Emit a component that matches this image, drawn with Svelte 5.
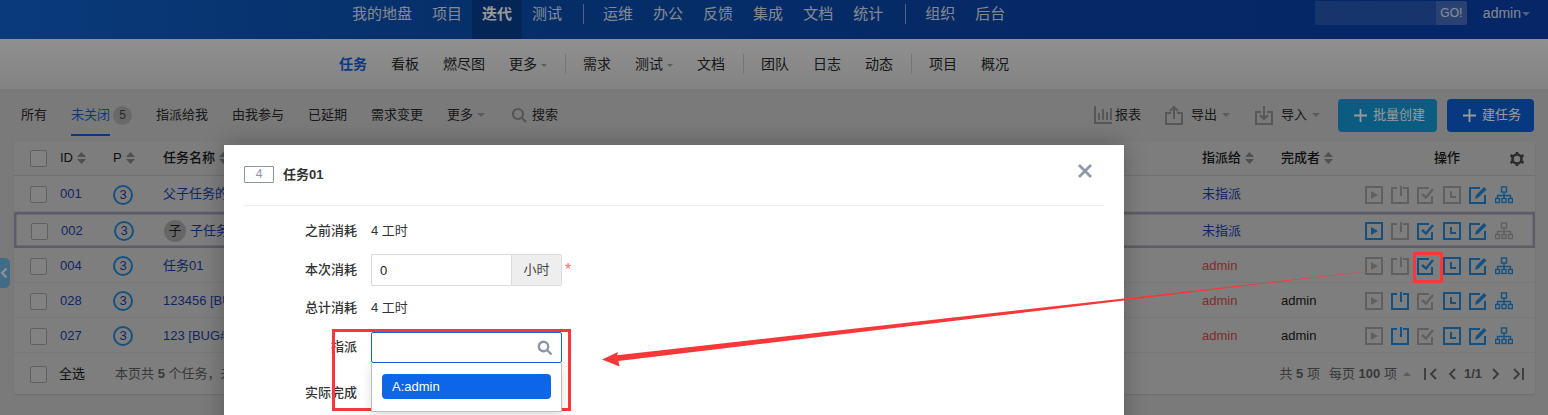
<script>
  const mainNav = [['我的地盘'], ['项目'], ['迭代', true], ['测试']];
  const opsNav = ['运维', '办公', '反馈', '集成', '文档', '统计'];
  const rows = [
    { id: '001', name: '父子任务的子任务', to: '未指派', toCls: 'link', done: '', st: [0, 0, 0, 0, 1, 1] },
    { id: '002', sub: true, name: '子任务名称', to: '未指派', toCls: 'link', done: '', sel: true, st: [1, 0, 1, 1, 1, 0] },
    { id: '004', name: '任务01', to: 'admin', toCls: 'red', done: '', st: [0, 0, 1, 1, 1, 1] },
    { id: '028', name: '123456 [BUG#12]', to: 'admin', toCls: 'red', done: 'admin', st: [0, 1, 0, 1, 1, 1] },
    { id: '027', name: '123 [BUG#11]', to: 'admin', toCls: 'red', done: 'admin', st: [0, 1, 0, 1, 1, 1] }
  ];
  const tabs = ['指派给我', '由我参与', '已延期', '需求变更'];
</script>

{#snippet sort()}
  <svg class="sort" width="9" height="12" viewBox="0 0 9 12"><path d="M4.500 0 9 5H0zM0 7h9l-4.500 5z" /></svg>
{/snippet}

{#snippet caret()}
  <i class="caret"></i>
{/snippet}

{#snippet check()}
  <span class="check"></span>
{/snippet}

{#snippet op(kind, on)}
  <svg class="op" class:on width="18" height="18" viewBox="0 0 18 18">
    {#if kind === 0}
      <rect x="1" y="1" width="16" height="16" class="ln" /><path d="M6 5l7 4-7 4z" class="fl" />
    {:else if kind === 1}
      <path d="M6 2H1v15h16V2h-5" class="ln" /><path d="M10 0v10" class="ln" />
    {:else if kind === 2}
      <path d="M15 10v7H1V2h11" class="ln" /><path d="M5 8l4 3.500L16 3" class="ln thick" />
    {:else if kind === 3}
      <rect x="1" y="1" width="16" height="16" class="ln" /><path d="M8 5v6h5" class="ln" />
    {:else if kind === 4}
      <path d="M16 9v8H1V2h10" class="ln" /><path d="M6 13l1-4 8-8 2.500 2.500-8 8z" class="fl" />
    {:else}
      <rect x="6.500" y="1" width="5" height="5" class="ln thin" />
      <rect x="0.500" y="12.500" width="4" height="4" class="ln thin" />
      <rect x="7" y="12.500" width="4" height="4" class="ln thin" />
      <rect x="13.500" y="12.500" width="4" height="4" class="ln thin" />
      <path d="M9 6v6.500M2.500 12.500V9.500h13v3" class="ln thin" />
    {/if}
  </svg>
{/snippet}

<div class="page">
  <header class="top">
    <nav class="nav">
      {#each mainNav as [t, active]}
        <span class="ni" class:active>{t}</span>
      {/each}
      <i class="nd"></i>
      {#each opsNav as t}
        <span class="ni">{t}</span>
      {/each}
      <i class="nd second"></i>
      <span class="ni">组织</span>
      <span class="ni">后台</span>
    </nav>
    <div class="quick">
      <span class="qi"></span><span class="go">GO!</span>
    </div>
    <span class="user">admin<i class="caret small"></i></span>
  </header>

  <div class="subnav">
    <span class="si active">任务</span>
    <span class="si">看板</span>
    <span class="si">燃尽图</span>
    <span class="si">更多{@render caret()}</span>
    <i class="sd"></i>
    <span class="si">需求</span>
    <span class="si">测试{@render caret()}</span>
    <span class="si">文档</span>
    <i class="sd"></i>
    <span class="si">团队</span>
    <span class="si">日志</span>
    <span class="si">动态</span>
    <i class="sd"></i>
    <span class="si">项目</span>
    <span class="si">概况</span>
  </div>

  <main class="main">
    <div class="toolbar">
      <div class="tabs">
        <span class="tab">所有</span>
        <span class="tab cur"><b>未关闭</b><em>5</em></span>
        {#each tabs as t}<span class="tab">{t}</span>{/each}
        <span class="tab">更多{@render caret()}</span>
        <span class="tab find">
          <svg width="16" height="16" viewBox="0 0 16 16"><circle cx="7" cy="7" r="5" /><path d="M11 11l4 4" /></svg>搜索
        </span>
      </div>
      <div class="acts">
        <span class="act rep">
          <svg width="18" height="18" viewBox="0 0 18 18"><path d="M1 0v17h17M5 14V7M9 14V3M13 14V6M17 14V2" /></svg>报表
        </span>
        <span class="act out">
          <svg width="18" height="20" viewBox="0 0 18 20"><path d="M6 8H1v11h16V8h-5M9 14V2M5 6l4-4 4 4" /></svg>导出{@render caret()}
        </span>
        <span class="act last">
          <svg width="18" height="20" viewBox="0 0 18 20"><path d="M6 7H1v12h16V7h-5M9 1v13M5 10l4 4 4-4" /></svg>导入{@render caret()}
        </span>
        <span class="btn teal">
          <svg width="13" height="13" viewBox="0 0 13 13"><path d="M6.500 0v13M0 6.500h13" /></svg>批量创建
        </span>
        <span class="btn navy">
          <svg width="13" height="13" viewBox="0 0 13 13"><path d="M6.500 0v13M0 6.500h13" /></svg>建任务
        </span>
      </div>
    </div>

    <section class="table">
      <div class="row head">
        <span class="cc">{@render check()}</span>
        <span>ID{@render sort()}</span>
        <span>P{@render sort()}</span>
        <span>任务名称{@render sort()}</span>
        <span>指派给{@render sort()}</span>
        <span>完成者{@render sort()}</span>
        <span class="opsh">
          <span>操作</span>
          <svg width="14" height="14" viewBox="0 0 14 14"><circle cx="7" cy="7" r="4.500" class="gear" /><path d="M7 0v3M7 11v3M0.500 3.200l2.600 1.500M10.900 9.300l2.600 1.500M0.500 10.800l2.600-1.500M10.900 4.700l2.600-1.500" class="gear" /></svg>
        </span>
      </div>
      {#each rows as r}
        <div class="row body" class:sel={r.sel}>
          <span class="cc">{@render check()}</span>
          <span class="link">{r.id}</span>
          <span><span class="pri">3</span></span>
          <span class="name">{#if r.sub}<span class="sub">子</span>{/if}{r.name}</span>
          <span class={r.toCls}>{r.to}</span>
          <span>{r.done}</span>
          <span class="ops">
            {#each r.st as on, k}
              {@render op(k, on)}
            {/each}
          </span>
        </div>
      {/each}
      <div class="foot">
        <span class="cc">{@render check()}</span>
        <span class="all">全选</span>
        <span class="sum">本页共 <b>5</b> 个任务，未开始</span>
        <span class="pager">
          <span class="pt">共 <b>5</b> 项</span>
          <span class="pt tight">每页 <b>100</b> 项</span>
          <i class="up"></i>
          <svg width="13" height="12" viewBox="0 0 13 12"><path d="M1 0v12M12 1L7 6l5 5" /></svg>
          <svg width="8" height="12" viewBox="0 0 8 12"><path d="M7 1L2 6l5 5" /></svg>
          <b class="pn">1/1</b>
          <svg width="8" height="12" viewBox="0 0 8 12"><path d="M1 1l5 5-5 5" /></svg>
          <svg width="11" height="12" viewBox="0 0 11 12"><path d="M1 1l5 5-5 5M10 0v12" /></svg>
        </span>
      </div>
    </section>
  </main>

  <span class="handle">
    <svg width="8" height="12" viewBox="0 0 8 12"><path d="M6.500 1.500L2 6l4.500 4.500" /></svg>
  </span>

  <div class="backdrop"></div>

  <div class="modal">
    <div class="mh">
      <span class="mid">4</span>
      <strong>任务01</strong>
      <svg class="close" width="14" height="14" viewBox="0 0 14 14"><path d="M1 1l12 12M13 1L1 13" /></svg>
    </div>
    <div class="form">
      <div class="fr r1"><label>之前消耗</label><span>4 工时</span></div>
      <div class="fr r2">
        <label>本次消耗</label>
        <span class="ig"><input value="0" /><span class="addon">小时</span></span>
        <span class="req">*</span>
      </div>
      <div class="fr r3"><label>总计消耗</label><span>4 工时</span></div>
      <div class="fr r4">
        <label>指派</label>
        <div class="chosen">
          <div class="cs">
            <svg width="16" height="16" viewBox="0 0 16 16"><circle cx="6.500" cy="6.500" r="4.700" /><path d="M10 10l4.500 4.500" /></svg>
          </div>
          <div class="drop"><div class="opt">A:admin</div></div>
        </div>
      </div>
      <div class="fr r5"><label>实际完成</label></div>
    </div>
  </div>

  <svg class="marks" width="1548" height="415" viewBox="0 0 1548 415">
    <rect x="333.500" y="330.500" width="236" height="79" class="box" />
    <rect x="1414.500" y="253.500" width="27" height="28" class="box" />
    <path d="M602 359.500L618 352l-1 3.300L1387 269 618.500 361l1 5.500z" class="arrow" />
  </svg>
</div>

<style>
  :global(body) { margin: 0; background: #ccc; }
  .page {
    position: relative;
    width: 1548px;
    height: 415px;
    overflow: hidden;
    background: #cbcbcb;
    color: #1a1a1a;
    font: 13px/1.4 "Liberation Sans", "Noto Sans CJK SC", sans-serif;
    display: flex;
    flex-direction: column;
  }
  i, em { font-style: normal; }
  svg { display: block; flex: none; }

  .top {
    height: 39px;
    flex: none;
    display: flex;
    background: linear-gradient(90deg, #1162cc 0, #0950b0 30%, #0944aa 70%, #0a40ac 100%);
    color: #fff;
  }
  .nav { display: flex; margin-left: 342px; font-size: 15px; align-items: stretch; }
  .ni { padding: 0 10px; line-height: 27px; opacity: .85; }
  .ni.active { background: #07408f; font-weight: 700; opacity: 1; }
  .nd { width: 1px; height: 20px; margin: 4px 9px 0 11px; background: rgba(255, 255, 255, .5); }
  .nd.second { margin-left: 12px; }
  .quick { margin-left: auto; margin-top: 1px; height: 24px; display: flex; }
  .qi { width: 121px; background: rgba(255, 255, 255, .12); }
  .go { width: 31px; line-height: 24px; text-align: center; font-size: 12px; background: rgba(255, 255, 255, .28); border-radius: 0 2px 2px 0; opacity: .9; }
  .user { margin: 0 18px 0 16px; font-size: 14px; line-height: 27px; display: flex; align-items: center; height: 27px; opacity: .85; }

  .caret {
    display: inline-block;
    width: 0;
    height: 0;
    border: 4px solid transparent;
    border-top-color: #999;
    border-bottom: 0;
    margin-left: 3px;
    vertical-align: middle;
  }
  .caret.small { border-top-color: rgba(255, 255, 255, .6); margin-left: 1px; }

  .subnav {
    height: 50px;
    flex: none;
    box-sizing: border-box;
    display: flex;
    align-items: center;
    padding: 1px 0 0 327px;
    background: linear-gradient(180deg, #f0f0f0, #dadada);
    font-size: 14px;
    color: #282828;
  }
  .si { padding: 0 12px; }
  .si .caret { border-width: 3.500px; border-bottom: 0; margin-left: 4px; }
  .si.active { color: #1260dc; font-weight: 700; }
  .sd { width: 1px; height: 20px; margin: -2px 5px 0 6px; background: #c4c4c4; }

  .main { flex: 1; display: flex; flex-direction: column; padding: 0 13px 0 14px; }
  .toolbar { height: 52px; flex: none; display: flex; justify-content: space-between; align-items: center; margin-right: 1px; }
  .tabs { display: flex; gap: 24px; align-items: center; padding-left: 7px; height: 100%; color: #2a2a2a; }
  .tab { display: flex; align-items: center; }
  .tab.cur { position: relative; }
  .tab.cur b { font-weight: 400; color: #1260dc; position: relative; height: 100%; }
  .tab.cur b::after {
    content: '';
    position: absolute;
    left: 0;
    right: 0;
    top: 28px;
    height: 2.500px;
    background: #1260dc;
  }
  .tab.cur em { width: 19px; height: 19px; margin-left: 3px; border-radius: 50%; background: #b0b0b0; text-align: center; line-height: 19px; font-size: 12px; color: #444; }
  .tab .caret { margin-left: 4px; }
  .find { margin-left: 2px; gap: 5px; }
  .find svg { fill: none; stroke: #8c8c8c; stroke-width: 2.200; }

  .acts { display: flex; align-items: center; color: #2a2a2a; }
  .act { display: flex; align-items: center; margin-right: 24px; gap: 8px; }
  .act.rep { gap: 3px; }
  .act.out { margin-right: 25px; }
  .act.last { margin-right: 18px; }
  .act svg { fill: none; stroke: #929292; stroke-width: 2; }
  .act .caret { margin-left: -3px; }
  .btn { height: 33px; display: flex; align-items: center; gap: 6px; padding: 0 12px 0 16px; border-radius: 4px; color: #fff; box-sizing: border-box; }
  .btn svg { fill: none; stroke: #fff; stroke-width: 1.800; }
  .teal { background: #1598d6; margin-right: 10px; }
  .navy { background: #0d60d8; padding-right: 13px; }

  .table { background: #d3d3d3; border-radius: 3px; box-shadow: 0 1px 2px rgba(0, 0, 0, .1); }
  .row {
    display: grid;
    grid-template-columns: 46px 53px 50px 1fr 79px 84px 170px;
    align-items: center;
    height: 35px;
    border-bottom: 1px solid #c6c6c6;
    box-sizing: border-box;
  }
  .row.body { padding-top: 2px; }
  .row.head { font-weight: 500; border-bottom: 1px solid #bbb; background: #d0d0d0; }
  .row.head > span { display: flex; align-items: center; gap: 4px; }
  .row:nth-child(2), .row:nth-child(3) { height: 36px; }
  .row.sel { box-shadow: inset 0 0 0 2.500px #9a9aac; border-bottom: 0; padding-left: 1px; }
  .cc { padding-left: 16px; display: flex; }
  .check { display: block; width: 15px; height: 15px; border: 1.500px solid #a0a0a0; border-radius: 2px; background: #d9d9d9; }
  .sort { fill: #858585; }
  .link { color: #1a40a8; }
  .red { color: #d04c4c; }
  .name { color: #1a40a8; white-space: nowrap; overflow: hidden; display: flex; align-items: center; }
  .pri {
    display: block;
    width: 16px;
    height: 16px;
    border: 2px solid #2288d8;
    border-radius: 50%;
    text-align: center;
    line-height: 16px;
    font-size: 13px;
    color: #1a40a8;
  }
  .sub { width: 22px; height: 22px; line-height: 22px; text-align: center; border-radius: 50%; background: #aaa; color: #222; margin-right: 4px; }
  .opsh { position: relative; padding-left: 69px; }
  .opsh svg { position: absolute; left: 145px; top: 3px; }
  .gear { fill: none; stroke: #4a4a4a; stroke-width: 2.600; }
  .ops { display: flex; gap: 8px; }
  .op { fill: none; }
  .ln { stroke: #a0a0a0; stroke-width: 2; fill: none; }
  .thin { stroke-width: 1.400; }
  .thick { stroke-width: 2.400; }
  .fl { fill: #a0a0a0; }
  .op.on .ln { stroke: #2288d8; }
  .op.on .fl { fill: #2288d8; }

  .foot { height: 41px; display: flex; align-items: center; padding-top: 1px; box-sizing: border-box; }
  .all { margin-left: 12px; }
  .sum { margin-left: 30px; color: #606060; white-space: nowrap; }
  .pager { margin-left: auto; margin-right: 11px; display: flex; align-items: center; color: #606060; }
  .pager svg { fill: none; stroke: #606060; stroke-width: 1.800; }
  .pt { margin-right: 9px; }
  .pt.tight { margin-right: 6px; }
  .up { width: 0; height: 0; border: 4px solid transparent; border-bottom-color: #999; border-top: 0; margin-right: 13px; }
  .pager > svg:nth-of-type(1) { margin-right: 11px; }
  .pn { margin: 0 10px 0 8px; color: #606060; }
  .pager > svg:nth-of-type(3) { margin-right: 13px; }

  .handle {
    position: absolute;
    left: 0;
    top: 258px;
    width: 10px;
    height: 30px;
    border-radius: 0 5px 5px 0;
    background: #6db3e0;
    display: flex;
    align-items: center;
  }
  .handle svg { fill: none; stroke: #f4f4f4; stroke-width: 2; }

  .backdrop { position: absolute; inset: 0; background: rgba(0, 0, 0, .4); }

  .modal {
    position: absolute;
    left: 224px;
    top: 145px;
    width: 900px;
    height: 400px;
    background: #fff;
    box-sizing: border-box;
    padding: 0 20px;
    box-shadow: 0 0 22px rgba(0, 0, 0, .28);
    color: #333;
  }
  .mh { height: 61px; box-sizing: border-box; border-bottom: 1px solid #eee; display: flex; align-items: flex-start; padding-top: 21px; position: relative; }
  .mid { width: 28px; height: 15px; border: 1px solid #8c93a8; border-radius: 1px; text-align: center; line-height: 15px; font-size: 12px; color: #8c93a8; margin-right: 9px; }
  .mh strong { font-weight: 700; line-height: 17px; }
  .close { position: absolute; right: 12px; top: 19px; fill: none; stroke: #8f97aa; stroke-width: 2.800; }

  .form { display: flex; flex-direction: column; padding-top: 11px; }
  .fr { display: grid; grid-template-columns: 113px auto 1fr; column-gap: 14px; align-items: center; }
  .fr label { text-align: right; font-weight: 500; }
  .r1 { height: 28px; }
  .r2 { height: 32px; margin-top: 9px; }
  .r3 { height: 24px; margin-top: 10px; }
  .r4 { height: 31px; margin-top: 12px; }
  .r5 { height: 24px; margin-top: 18px; }

  .ig { display: flex; width: 191px; height: 32px; box-sizing: border-box; }
  .ig input {
    width: 140px;
    box-sizing: border-box;
    border: 1px solid #dcdcdc;
    border-right: 0;
    border-radius: 2px 0 0 2px;
    padding: 2px 8px 0;
    font: inherit;
    color: #222;
    outline: none;
  }
  .addon { flex: 1; background: #eee; border: 1px solid #dcdcdc; border-radius: 0 2px 2px 0; text-align: center; line-height: 30px; color: #444; }
  .req { color: #ff6b6b; font-size: 16px; margin-left: -11px; }

  .chosen { position: relative; width: 191px; height: 31px; z-index: 1; }
  .cs { height: 31px; box-sizing: border-box; border: 1px solid #1565e0; border-radius: 2px; display: flex; justify-content: flex-end; align-items: center; padding-right: 8px; background: #fff; }
  .cs svg { fill: none; stroke: #8c96ab; stroke-width: 2.400; }
  .drop {
    position: absolute;
    left: 0;
    right: 0;
    top: 31px;
    height: 49px;
    box-sizing: border-box;
    padding: 11px 10px;
    background: #fff;
    border: 1px solid #bdbdbd;
    border-top: 0;
    box-shadow: 0 4px 10px rgba(0, 0, 0, .14);
  }
  .opt { height: 25px; line-height: 25px; padding-left: 10px; background: #0d66ea; color: #fff; border-radius: 4px; }

  .marks { position: absolute; inset: 0; pointer-events: none; }
  .box { fill: none; stroke: #f83838; stroke-width: 3; }
  .arrow { fill: #f83838; }
</style>
